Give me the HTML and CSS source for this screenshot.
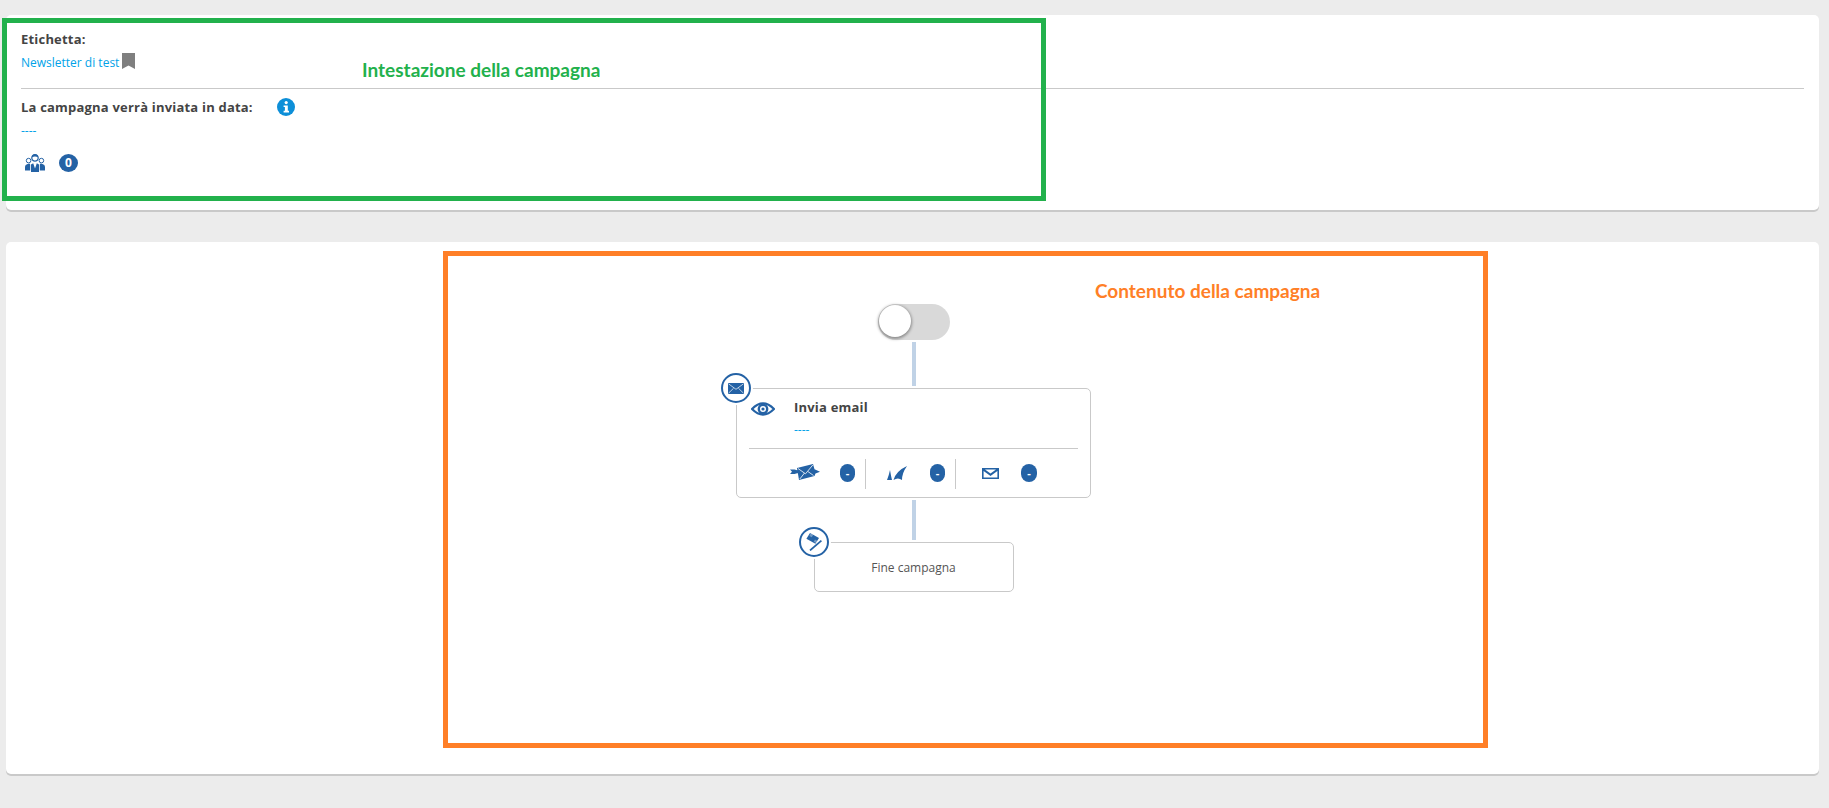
FILE: index.html
```html
<!DOCTYPE html>
<html lang="it">
<head>
<meta charset="utf-8">
<title>Campagna</title>
<link rel="stylesheet" href="styles.css">
</head>
<body>
<main class="page">
  <section class="card header-card">
    <div class="field-label">Etichetta:</div>
    <div class="label-row">
      <a class="link">Newsletter di test</a>
      <svg class="bookmark" viewBox="0 0 13 16"><path d="M0 0H13V16L6.5 12.5L0 16Z" fill="#7f7f7f"/></svg>
    </div>
    <hr class="rule">
    <div class="date-row">
      <span class="field-label">La campagna verrà inviata in data:</span>
      <svg class="info" viewBox="0 0 18 18"><circle cx="9" cy="9" r="9" fill="#0d8fd8"/><circle cx="9.2" cy="4.6" r="1.6" fill="#fff"/><path d="M6.6 7.4H10.8V12.8H12V14.4H6.6V12.8H7.9V9H6.6Z" fill="#fff"/></svg>
    </div>
    <div class="dashes">----</div>
    <div class="users-row">
      <svg class="users" viewBox="0 0 20 18"><g fill="none" stroke="#2462a5"><circle cx="10" cy="4" r="3.2" stroke-width="1.2"/><circle cx="3.6" cy="6.6" r="2.3" stroke-width="1"/><circle cx="16.4" cy="6.6" r="2.3" stroke-width="1"/></g><path d="M6.8 3.2Q7.4 0 10 0Q12.6 0 13.2 3.2Q10 1.6 6.8 3.2Z" fill="#2462a5"/><path d="M0 16.5V12.8Q0 10.4 2.6 10L4.6 9.6L5.2 10.4V16.5ZM20 16.5V12.8Q20 10.4 17.4 10L15.4 9.6L14.8 10.4V16.5ZM6 18V10.6L8.2 9.2L10 14.4L11.8 9.2L14 10.6V18Z" fill="#2462a5"/></svg>
      <span class="badge badge-round">0</span>
    </div>
  </section>

  <section class="card flow-card">
    <div class="toggle"><span class="knob"></span></div>
    <div class="connector first"></div>
    <article class="node send-node">
      <span class="node-mark">
        <svg class="mark-mail" viewBox="0 0 16 11"><path d="M0 0H16V11H0Z" fill="#2462a5"/><path d="M0.5 0.8L8 6.3L15.5 0.8M0.5 10.2L5.6 5.2M15.5 10.2L10.4 5.2" fill="none" stroke="#fff" stroke-width=".7"/></svg>
      </span>
      <div class="node-head">
        <svg class="eye" viewBox="0 0 24 14"><path d="M1 7Q12 -4 23 7Q12 18 1 7Z" fill="none" stroke="#2462a5" stroke-width="2.2"/><circle cx="12" cy="7" r="4.2" fill="none" stroke="#2462a5" stroke-width="2.4"/><circle cx="12" cy="7" r="1.6" fill="#2462a5"/></svg>
        <div class="node-title">
          <div class="title">Invia email</div>
          <div class="dashes sub">----</div>
        </div>
      </div>
      <hr class="rule inner">
      <div class="stats">
        <div class="stat">
          <svg class="sent" viewBox="0 0 30 16"><path d="M0 5.5H4.5L8 6.5V9L4.5 10H0L2 7.8ZM7 4L23 0L24.5 5.2L30 7.8L25.5 9.6L24.5 12L9 16Z" fill="#2462a5"/><path d="M8 4.5L15.5 9.8L22.8 1M9.8 15L14.5 9M23.5 11.5L18 7.6" fill="none" stroke="#fff" stroke-width=".8"/></svg>
          <span class="badge">-</span>
        </div>
        <div class="stat">
          <svg class="fin" viewBox="0 0 20 14"><path d="M0 14Q2 9 3 4Q4 10 5 14ZM6.5 14Q9 5 20 0Q15 7 15 14Q11 11 6.5 14Z" fill="#2462a5"/></svg>
          <span class="badge">-</span>
        </div>
        <div class="stat">
          <svg class="mail-open" viewBox="0 0 17 11"><path d="M0 0H17V11H0ZM1.6 3V9.4H15.4V3L8.5 8ZM3 1.5L8.5 5.6L14 1.5Z" fill="#2462a5" fill-rule="evenodd"/></svg>
          <span class="badge wide">-</span>
        </div>
      </div>
    </article>
    <div class="connector second"></div>
    <article class="node end-node">
      <span class="node-mark">
        <svg class="mark-flag" viewBox="0 0 16 18"><path d="M4 0L13 5L9.4 10.8L0.4 5.8Z" fill="#2462a5"/><path d="M7.2 1.8L5.8 4.2L3.4 2.9L4.6 0.4ZM9 6.4L11.6 7.9L10.2 10.2L7.7 8.8Z" fill="#fff" opacity=".35"/><path d="M15.4 7.6L4 17.4" stroke="#2462a5" stroke-width="1.8" fill="none"/></svg>
      </span>
      Fine campagna
    </article>
  </section>
</main>

<div class="note note-green"></div>
<div class="note-text note-text-green">Intestazione della campagna</div>
<div class="note note-orange"></div>
<div class="note-text note-text-orange">Contenuto della campagna</div>
</body>
</html>
```
FILE: styles.css
```css
* { box-sizing: border-box; }
html, body { margin: 0; height: 100%; overflow: hidden; }
body {
  background: #ececec;
  font-family: "Open Sans", sans-serif;
  font-size: 12px;
  color: #444;
  position: relative;
}
.page {
  padding: 15px 10px 0 6px;
  display: flex;
  flex-direction: column;
  gap: 32px;
}
.card {
  background: #fff;
  border-radius: 5px;
  box-shadow: 0 2px 0 #c9c9c9;
}
.header-card {
  height: 195px;
  padding: 15px 15px 0;
}
.field-label {
  font-size: 13px;
  font-weight: 700;
  letter-spacing: .2px;
  line-height: 18px;
  color: #444;
}
.label-row {
  display: flex;
  align-items: flex-start;
  margin-top: 5px;
  height: 35px;
}
.link { font-size: 12px; line-height: 18px; color: #00a2e8; margin-top: 1px; }
.bookmark { width: 13px; height: 16px; margin-left: 3px; }
.rule { border: 0; border-top: 1px solid #c9c9c9; margin: 0; }
.date-row {
  display: flex;
  align-items: center;
  margin-top: 9px;
  height: 18px;
}
.info { width: 18px; height: 18px; margin-left: 24px; }
.dashes { font-size: 12px; line-height: 16px; color: #00a2e8; margin-top: 7px; }
.users-row {
  display: flex;
  align-items: center;
  margin-top: 15px;
  padding-left: 4px;
}
.users { width: 20px; height: 18px; }
.badge {
  width: 15px;
  height: 18px;
  border-radius: 8px;
  background: #2462a5;
  color: #fff;
  font-size: 11px;
  font-weight: 700;
  line-height: 17px;
  text-align: center;
}
.badge.wide { width: 16px; }
.badge-round { width: 19px; border-radius: 50%; margin-left: 14px; font-size: 12px; line-height: 18px; }

.flow-card {
  height: 532px;
  display: flex;
  flex-direction: column;
  align-items: center;
  padding: 62px 0 0 2px;
}
.toggle {
  width: 72px;
  height: 36px;
  border-radius: 18px;
  background: #d9d9d9;
  padding: 1px;
}
.knob {
  display: block;
  width: 32px;
  height: 32px;
  border-radius: 50%;
  background: #fff;
  box-shadow: 0 1px 3px 1px rgba(0,0,0,.35);
}
.connector { width: 4px; background: #c0d2e6; }
.connector.first { height: 44px; margin-top: 2px; }
.connector.second { height: 40px; margin-top: 2px; }
.node {
  position: relative;
  background: #fff;
  border: 1px solid #c9c9c9;
  border-radius: 5px;
  margin-top: 2px;
}
.node-mark {
  position: absolute;
  left: -16px;
  top: -16px;
  width: 30px;
  height: 30px;
  border-radius: 50%;
  border: 2px solid #2462a5;
  background: #fff;
  box-shadow: 0 0 0 2px #fff;
  display: flex;
  align-items: center;
  justify-content: center;
}
.mark-mail { width: 16px; height: 11px; }
.mark-flag { width: 16px; height: 18px; }
.send-node { width: 355px; height: 110px; padding: 11px 12px 0; }
.node-head { display: flex; height: 48px; }
.eye { width: 24px; height: 14px; margin: 2px 0 0 2px; }
.node-title { margin-left: 19px; margin-top: -2px; }
.title { font-size: 13px; font-weight: 700; letter-spacing: .2px; line-height: 18px; color: #444; }
.dashes.sub { font-size: 12px; margin-top: 6px; }
.rule.inner { margin: 0; }
.stats {
  display: flex;
  justify-content: flex-end;
  margin-top: 10px;
  height: 30px;
  padding-right: 41px;
}
.stat {
  width: 90px;
  display: flex;
  align-items: center;
  justify-content: flex-end;
  padding: 0 10px 2px 0;
  gap: 20px;
  border-right: 1px solid #c9c9c9;
}
.stat:last-child { border-right: 0; padding-right: 0; width: 81px; }
.stat .badge { flex: none; }
.sent { width: 30px; height: 16px; margin-bottom: 3px; }
.fin { width: 20px; height: 14px; margin-right: 3px; }
.mail-open { width: 17px; height: 11px; margin-right: 2px; }
.end-node {
  width: 200px;
  height: 50px;
  display: flex;
  align-items: center;
  justify-content: center;
  font-size: 12px;
  color: #555;
}

.note { position: absolute; border-style: solid; border-width: 5px; }
.note-green { left: 2px; top: 18px; width: 1044px; height: 183px; border-color: #22b14c; }
.note-orange { left: 443px; top: 251px; width: 1045px; height: 497px; border-color: #ff7f27; }
.note-text {
  position: absolute;
  font-family: "Lato", sans-serif;
  font-weight: 700;
  font-size: 19px;
  line-height: 22px;
  white-space: nowrap;
}
.note-text-green { left: 362px; top: 59px; color: #22b14c; }
.note-text-orange { left: 1095px; top: 280px; color: #ff7f27; }
```
